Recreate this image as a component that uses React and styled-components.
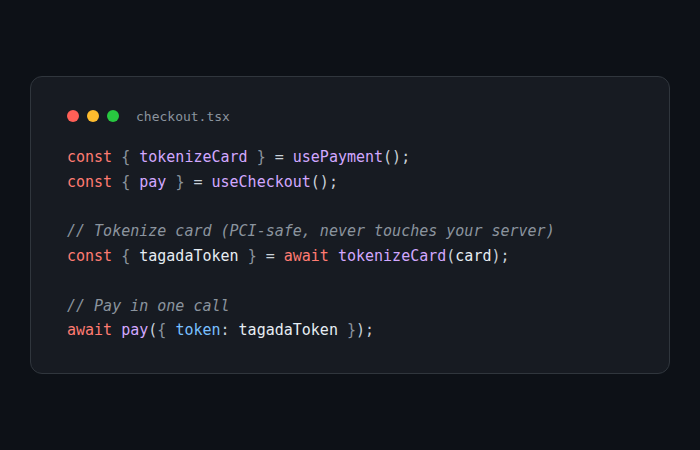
import React from 'react';
import styled, { createGlobalStyle } from 'styled-components';

const GlobalStyle = createGlobalStyle`
	html, body {
		margin: 0;
		padding: 0;
		background: #0d1117;
	}
	#root {
		min-height: 100vh;
	}
`;

const Page = styled.div`
	width: 100vw;
	height: 100vh;
	display: flex;
	align-items: center;
	justify-content: center;
	background: #0d1117;
`;

const Card = styled.div`
	box-sizing: border-box;
	width: 640px;
	padding: 29px 36px 30px;
	background: #171b22;
	border: 1px solid #30363d;
	border-radius: 12px;
`;

const Header = styled.div`
	display: flex;
	align-items: center;
	height: 20px;
	margin-bottom: 19px;
`;

const Dots = styled.div`
	display: flex;
	gap: 8px;
	margin-right: 17px;
`;

const Dot = styled.span`
	width: 12px;
	height: 12px;
	border-radius: 50%;
	background: ${(p) => p.color};
`;

const FileName = styled.span`
	font-family: 'DejaVu Sans Mono', monospace;
	font-size: 13px;
	color: #8b949e;
`;

const Code = styled.pre`
	margin: 0;
	font-family: 'DejaVu Sans Mono', monospace;
	font-size: 15px;
	line-height: 24.75px;
	color: #c9d1d9;
`;

const Line = styled.div`
	height: 24.75px;
	white-space: pre;
`;

const colors = {
	k: '#ff7b72',
	f: '#d2a8ff',
	v: '#e6edf3',
	p: '#8b949e',
	o: '#c9d1d9',
	b: '#79c0ff',
	c: '#8b949e',
};

const Tok = styled.span`
	color: ${(p) => colors[p.t]};
	font-style: ${(p) => (p.t === 'c' ? 'italic' : 'normal')};
`;

// each line is a list of [type, text]
const lines = [
	[['k', 'const'], ['o', ' '], ['p', '{'], ['o', ' '], ['f', 'tokenizeCard'], ['o', ' '], ['p', '}'], ['o', ' = '], ['f', 'usePayment'], ['o', '();']],
	[['k', 'const'], ['o', ' '], ['p', '{'], ['o', ' '], ['f', 'pay'], ['o', ' '], ['p', '}'], ['o', ' = '], ['f', 'useCheckout'], ['o', '();']],
	[],
	[['c', '// Tokenize card (PCI-safe, never touches your server)']],
	[['k', 'const'], ['o', ' '], ['p', '{'], ['o', ' '], ['v', 'tagadaToken'], ['o', ' '], ['p', '}'], ['o', ' = '], ['k', 'await'], ['o', ' '], ['f', 'tokenizeCard'], ['o', '('], ['v', 'card'], ['o', ');']],
	[],
	[['c', '// Pay in one call']],
	[['k', 'await'], ['o', ' '], ['f', 'pay'], ['o', '('], ['p', '{'], ['o', ' '], ['b', 'token'], ['o', ': '], ['v', 'tagadaToken'], ['o', ' '], ['p', '}'], ['o', ');']],
];

export default function App() {
	return (
		<Page>
			<GlobalStyle />
			<Card>
				<Header>
					<Dots>
						<Dot color='#ff5f57' />
						<Dot color='#febc2e' />
						<Dot color='#28c840' />
					</Dots>
					<FileName>checkout.tsx</FileName>
				</Header>
				<Code>
					{lines.map((toks, i) => (
						<Line key={i}>
							{toks.map(([t, s], j) => (
								<Tok key={j} t={t}>
									{s}
								</Tok>
							))}
						</Line>
					))}
				</Code>
			</Card>
		</Page>
	);
}
